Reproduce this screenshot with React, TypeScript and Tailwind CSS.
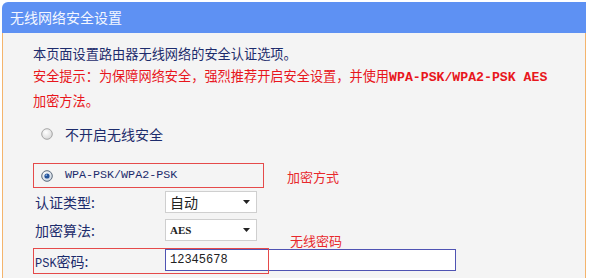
const cjk = "font-['Noto_Sans_CJK_SC','Noto_Sans',sans-serif]";
const mono = "font-['Liberation_Mono','Courier_New',monospace]";

function Radio({ checked }: { checked?: boolean }) {
  return (
    <svg width="12" height="12" viewBox="0 0 12 12" className="shrink-0">
      <defs>
        <radialGradient id={checked ? 'rg-on' : 'rg-off'} cx="40%" cy="35%" r="70%">
          <stop offset="0%" stopColor="#ffffff" />
          <stop offset="100%" stopColor={checked ? '#c9d3e0' : '#d6d6d6'} />
        </radialGradient>
      </defs>
      <circle cx="6" cy="6" r="5.3" fill={`url(#${checked ? 'rg-on' : 'rg-off'})`} stroke={checked ? '#5d6b7d' : '#a6a6a6'} strokeWidth="1" />
      {checked && <circle cx="6" cy="6" r="2.6" fill="#24539a" />}
      {checked && <circle cx="5.3" cy="5.2" r="0.9" fill="#7fa4d8" />}
    </svg>
  );
}

function Select({ value, small }: { value: string; small?: boolean }) {
  return (
    <div className="w-[92px] h-[22px] bg-white border border-[#cfcfcf] flex items-center pl-[4px] pr-[6px]">
      <span
        className={
          small
            ? "flex-1 text-[11px] font-bold text-[#222] font-['Liberation_Serif',serif]"
            : `flex-1 text-[14px] text-[#222] ${cjk}`
        }
      >
        {value}
      </span>
      <svg width="7" height="4" viewBox="0 0 7 4">
        <path d="M0 0h7L3.5 4z" fill="#222" />
      </svg>
    </div>
  );
}

export default function App() {
  return (
    <div className={`w-[600px] h-[278px] overflow-hidden bg-white pt-[2px] pl-[2px] ${cjk}`}>
      <div className="w-[584px] h-[276px] flex flex-col">
        <div className="h-[31px] shrink-0 bg-[#5e91f3] rounded-tl-[6px] pl-[8px] flex items-center text-[#f4f7ff] text-[14px]">
          无线网络安全设置
        </div>

        <div className="flex-1 bg-[#f4f4f4] border-l border-r border-[#f4b46c] pl-[30px] pt-[11px] text-[13.2px] text-[#1d2c6c]">
          <p className="leading-[20px]">本页面设置路由器无线网络的安全认证选项。</p>
          <p className="leading-[23px] text-[#e8161c]">
            安全提示：为保障网络安全，强烈推荐开启安全设置，并使用
            <span className={`${mono} font-bold text-[13.2px]`}>WPA-PSK/WPA2-PSK AES</span>
            <br />
            加密方法。
          </p>

          <div className="mt-[12px] h-[20px] flex items-center pl-[8px] gap-[12px]">
            <Radio />
            <span className="text-[14px]">不开启无线安全</span>
          </div>

          <div className="mt-[19px] flex items-center">
            <div className="w-[231px] h-[25px] border border-[#e54a4a] flex items-center pl-[7px] gap-[12px]">
              <Radio checked />
              <span className={`${mono} text-[11.7px] text-[#1d2c6c]`}>WPA-PSK/WPA2-PSK</span>
            </div>
            <span className="ml-[23px] mt-[3px] text-[13px] text-[#e8282c]">加密方式</span>
          </div>

          <div className="mt-[3px] flex items-center">
            <span className="w-[132px] pl-[2px] text-[14px]">认证类型:</span>
            <Select value="自动" />
          </div>

          <div className="mt-[6px] flex items-center">
            <span className="w-[132px] pl-[2px] text-[14px]">加密算法:</span>
            <Select value="AES" small />
            <span className="ml-[33px] self-end translate-y-[8px] text-[13px] leading-[16px] text-[#e8282c]">无线密码</span>
          </div>

          <div className="relative mt-[7px] h-[26px] flex items-start">
            <span className="w-[132px] pl-[2px] pt-[3px] text-[14px]">
              <span className={`${mono} text-[12px]`}>PSK</span>密码:
            </span>
            <div className="mt-[1px] w-[291px] h-[22px] bg-white border border-[#4f53b3] flex items-center pl-[4px]">
              <span className={`${mono} text-[12px] text-[#222]`}>12345678</span>
            </div>
            <div className="absolute left-0 top-0 w-[236px] h-[26px] border border-[#e54a4a] pointer-events-none" />
          </div>

          <p className="mt-[2px] pl-[136px] text-[13px] leading-[18px]">
            (8-63个ASCII码字符或8-64个十六进制字符)
          </p>
        </div>
      </div>
    </div>
  );
}
